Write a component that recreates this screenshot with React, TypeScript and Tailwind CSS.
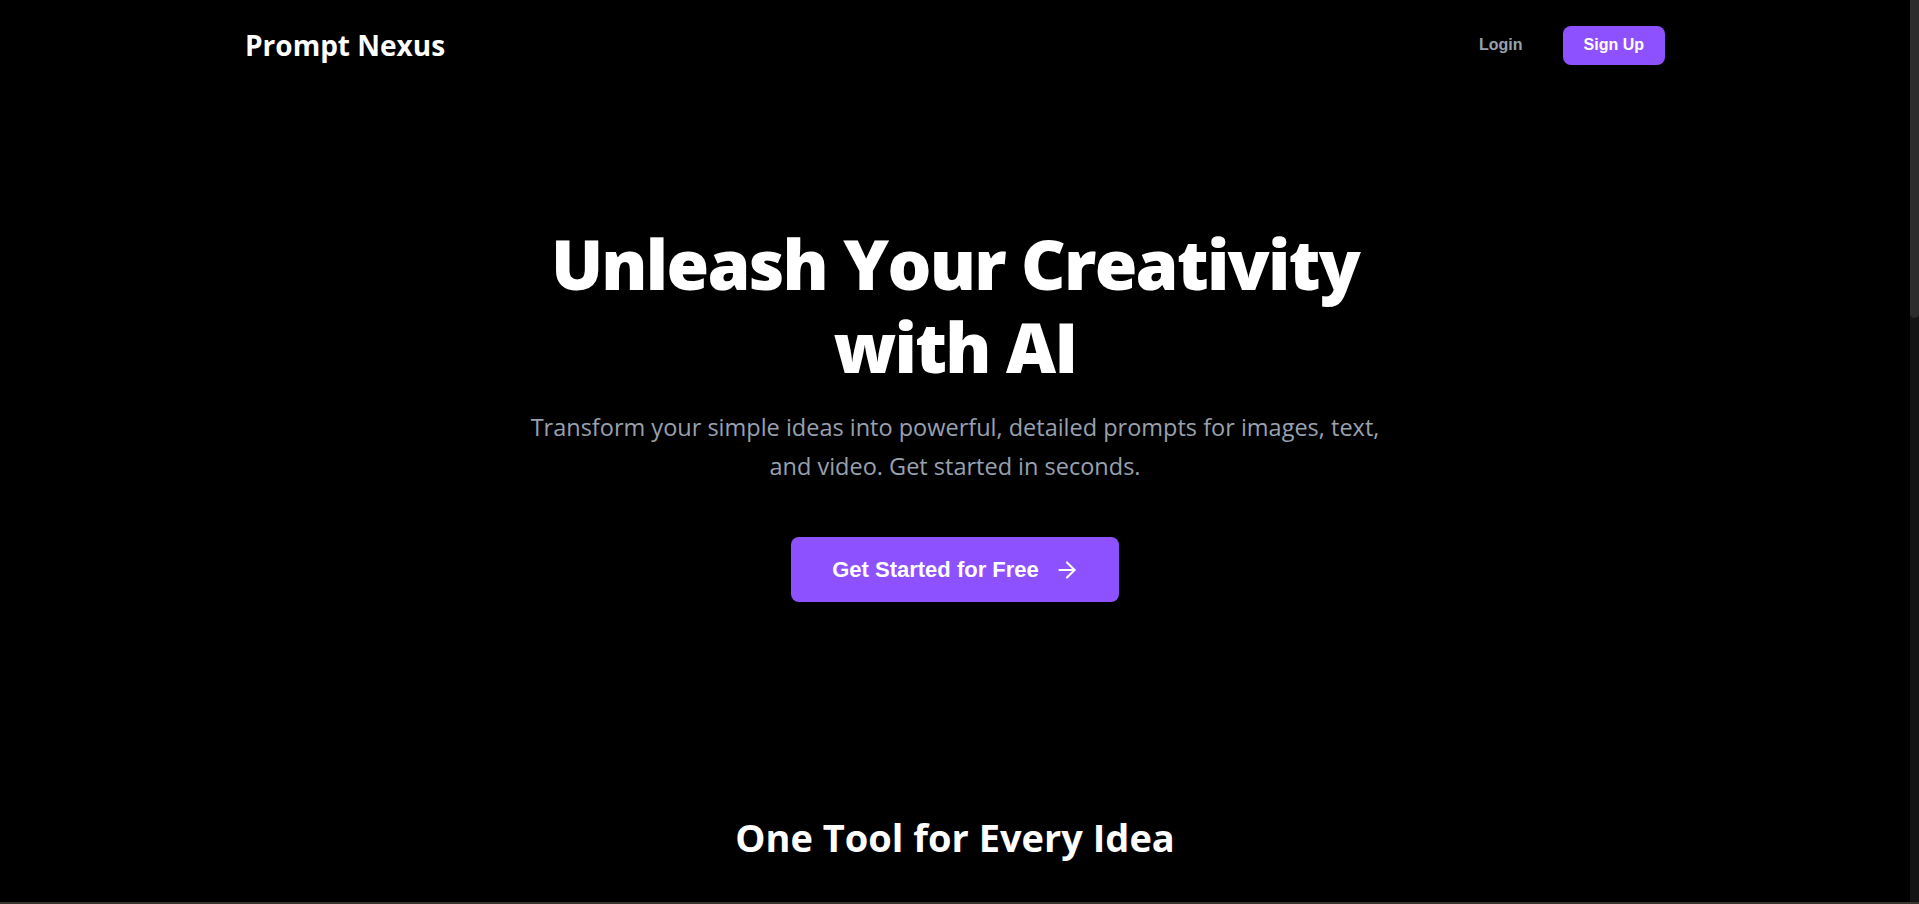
import { ArrowRight, Sparkles, Image, Type, Video } from 'lucide-react';

const features = [
  { icon: Image, title: 'Image Prompts', text: 'Turn a loose idea into a rich, detailed prompt for any image model.' },
  { icon: Type, title: 'Text Prompts', text: 'Craft structured prompts for writing, summaries, code and more.' },
  { icon: Video, title: 'Video Prompts', text: 'Describe scenes, motion and mood for modern video generators.' },
];

export default function App() {
  return (
    <div className="h-screen flex flex-col bg-black text-white [font-family:'Open_Sans','Noto_Sans',sans-serif]">
      <div className="flex-1 min-h-0 flex">
        <div className="flex-1 overflow-y-auto [scrollbar-width:none]">
          {/* Header */}
          <header className="max-w-[1420px] mx-auto flex items-center justify-between pt-[24px] pb-[26px]">
            <span className="text-[28px] font-bold">Prompt Nexus</span>
            <nav className="flex items-center gap-10 [font-family:'Liberation_Sans',Arial,sans-serif]">
              <a href="#" className="text-[16px] font-bold text-gray-400">Login</a>
              <a href="#" className="h-[39px] px-[21px] flex items-center rounded-lg bg-violet-500 text-[16px] font-bold text-white">
                Sign Up
              </a>
            </nav>
          </header>

          {/* Hero */}
          <section className="flex flex-col items-center text-center pt-[130px]">
            <h1 className="text-[69px] leading-[83px] font-extrabold tracking-tight max-w-[880px]">
              Unleash Your Creativity with AI
            </h1>
            <p className="mt-[20px] max-w-[875px] text-[23.5px] leading-[39px] text-gray-400">
              Transform your simple ideas into powerful, detailed prompts for images, text, and video. Get started in seconds.
            </p>
            <a
              href="#"
              className="mt-[51px] h-[65px] pl-[41px] pr-[39px] flex items-center gap-[15px] rounded-lg bg-violet-500 text-[22px] font-bold text-white [font-family:'Liberation_Sans',Arial,sans-serif]"
            >
              Get Started for Free
              <ArrowRight size={26} strokeWidth={1.9} />
            </a>
          </section>

          {/* Features */}
          <section className="pt-[207px] pb-32">
            <h2 className="text-center text-[38px] font-bold">One Tool for Every Idea</h2>
            <div className="max-w-[1420px] mx-auto mt-24 grid grid-cols-3 gap-8">
              {features.map((f) => (
                <div key={f.title} className="rounded-2xl border border-white/10 bg-white/5 p-10 min-h-[360px]">
                  <div className="w-12 h-12 rounded-xl bg-violet-500/20 text-violet-400 flex items-center justify-center">
                    <f.icon size={24} />
                  </div>
                  <h3 className="mt-6 text-2xl font-bold">{f.title}</h3>
                  <p className="mt-3 text-gray-400 leading-relaxed">{f.text}</p>
                </div>
              ))}
            </div>
          </section>

          {/* CTA */}
          <section className="py-32 flex flex-col items-center text-center">
            <Sparkles size={36} className="text-violet-400" />
            <h2 className="mt-6 text-[40px] font-bold">Ready to build better prompts?</h2>
            <p className="mt-4 text-xl text-gray-400">Join creators turning ideas into results every day.</p>
          </section>

          <footer className="border-t border-white/10 py-10 text-center text-sm text-gray-500">
            © 2025 Prompt Nexus. All rights reserved.
          </footer>
        </div>

        {/* Scrollbar */}
        <div className="w-[9px] bg-[#141414]">
          <div className="h-[318px] bg-[#2c2c2c] rounded-b-[5px]" />
        </div>
      </div>
      <div className="h-[2px] bg-[#38352f]" />
    </div>
  );
}
